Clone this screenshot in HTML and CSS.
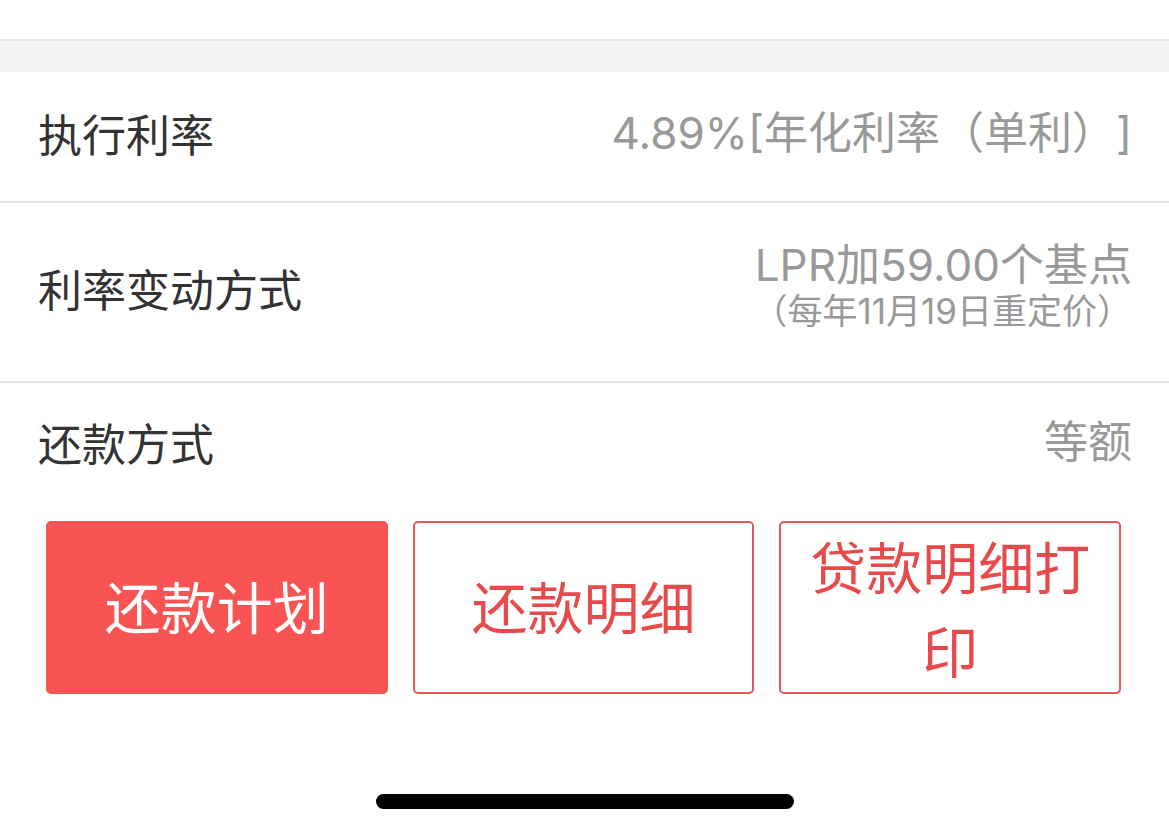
FILE: index.html
```html
<!DOCTYPE html>
<html lang="zh-CN">
<head>
<meta charset="utf-8">
<title>贷款详情</title>
<link rel="stylesheet" href="styles.css">
</head>
<body>
<div class="page">
  <div class="top-space"></div>
  <div class="gap-band"></div>

  <div class="info-list">
    <div class="info-row row-rate">
      <span class="info-label">执行利率</span>
      <span class="info-value">4.89%[年化利率（单利）]</span>
    </div>
    <div class="info-row row-change">
      <span class="info-label">利率变动方式</span>
      <div class="info-value stacked">
        <div class="value-main">LPR加59.00个基点</div>
        <div class="value-sub">（每年11月19日重定价）</div>
      </div>
    </div>
    <div class="info-row row-method">
      <span class="info-label">还款方式</span>
      <span class="info-value">等额</span>
    </div>
  </div>

  <div class="actions">
    <button class="action primary">还款计划</button>
    <button class="action outline">还款明细</button>
    <button class="action outline">贷款明细打印</button>
  </div>

  <div class="home-indicator"></div>
</div>
</body>
</html>
```

FILE: styles.css
```css
html, body {
  margin: 0;
  padding: 0;
  background: #ffffff;
}

body {
  font-family: "Noto Sans CJK SC", "Noto Sans", sans-serif;
  -webkit-font-smoothing: antialiased;
  text-spacing-trim: space-all;
}

.page {
  width: 1169px;
  height: 833px;
  overflow: hidden;
  display: flex;
  flex-direction: column;
}

.top-space {
  height: 39px;
  background: #ffffff;
}

.gap-band {
  height: 31px;
  background: #f4f4f4;
  border-top: 2px solid #e6e6e6;
}

.info-list {
  display: flex;
  flex-direction: column;
}

.info-row {
  display: flex;
  align-items: center;
  justify-content: space-between;
  padding: 0 37px 8px 38px;
  box-sizing: border-box;
}

.row-rate {
  height: 131px;
  border-bottom: 2px solid #e4e4e4;
}

.row-change {
  height: 180px;
  border-bottom: 2px solid #e4e4e4;
}

.row-method {
  height: 126px;
}

.info-label {
  font-size: 44px;
  line-height: 52px;
  color: #333333;
  white-space: nowrap;
}

/* Latin digits and brackets from Inter, CJK from Noto */
.info-value {
  font-family: "Inter", "Noto Sans CJK SC", sans-serif;
  font-size: 44px;
  line-height: 52px;
  color: #999999;
  white-space: nowrap;
  text-align: right;
}

.info-value.stacked {
  display: flex;
  flex-direction: column;
  align-items: flex-end;
}

.value-main {
  display: block;
  height: 46px;
  font-size: 44px;
  line-height: 46px;
}

.value-sub {
  display: block;
  height: 46px;
  font-size: 35px;
  line-height: 46px;
}

.actions {
  display: flex;
  gap: 25px;
  padding: 12px 48px 0 46px;
}

.action {
  flex: 1 1 0;
  height: 173px;
  box-sizing: border-box;
  border-radius: 5px;
  padding: 0 12px 6px;
  font-family: "Noto Sans CJK SC", sans-serif;
  font-size: 56px;
  line-height: 84px;
  text-align: center;
  cursor: pointer;
}

.action.primary {
  background: #f95454;
  border: 2px solid #f95454;
  color: #ffffff;
}

.action.outline {
  background: #ffffff;
  border: 2px solid #e45a5c;
  color: #e8494b;
}

.home-indicator {
  align-self: center;
  width: 418px;
  height: 15px;
  margin-top: 100px;
  border-radius: 8px;
  background: #000000;
}
```
